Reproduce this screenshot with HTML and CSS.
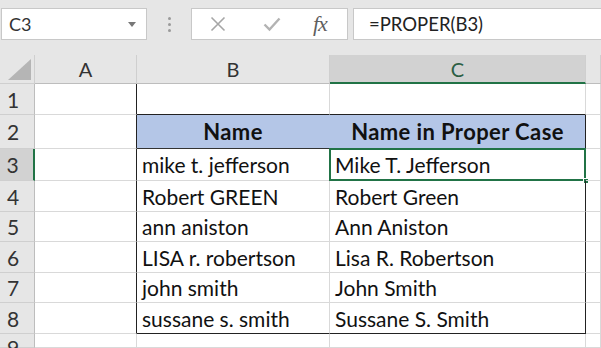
FILE: index.html
```html
<!DOCTYPE html>
<html>
<head>
<meta charset="utf-8">
<link rel="stylesheet" href="styles.css">
</head>
<body>
<div class="app">
  <div class="toolbar">
    <div class="namebox">
      <span class="ref">C3</span>
      <svg class="dd" width="8" height="5" viewBox="0 0 8 5"><path d="M0 0H8L4 5Z" fill="#777"/></svg>
    </div>
    <div class="grip"><i></i><i></i><i></i></div>
    <div class="fbtns">
      <svg class="ico" width="16" height="16" viewBox="0 0 16 16"><path d="M1.5 1.5L14.5 14.5M14.5 1.5L1.5 14.5" stroke="#a6a6a6" stroke-width="1.6" fill="none"/></svg>
      <svg class="ico" width="18" height="16" viewBox="0 0 18 16"><path d="M1.5 8.5L6.5 13.5L16.5 2.5" stroke="#b3b3b3" stroke-width="2.4" fill="none"/></svg>
      <span class="fx">fx</span>
    </div>
    <div class="formula">=PROPER(B3)</div>
  </div>
  <div class="sheet">
    <div class="hd corner"><svg width="23" height="21" viewBox="0 0 23 21"><path d="M23 0V21H0Z" fill="#b5b5b5"/></svg></div>
    <div class="hd col">A</div>
    <div class="hd col">B</div>
    <div class="hd col sel">C</div>
    <div class="hd col"></div>

    <div class="hd rowh">1</div>
    <div class="c tb-r"></div>
    <div class="c tb-b"></div>
    <div class="c tb-b"></div>
    <div class="c"></div>

    <div class="hd rowh">2</div>
    <div class="c tb-r"></div>
    <div class="c th th-b">Name</div>
    <div class="c th tb-r">Name in Proper Case</div>
    <div class="c"></div>

    <div class="hd rowh rsel">3</div>
    <div class="c tb-r"></div>
    <div class="c">mike t. jefferson</div>
    <div class="c tb-r">Mike T. Jefferson<span class="selbox"></span><span class="handle"></span></div>
    <div class="c"></div>

    <div class="hd rowh">4</div>
    <div class="c tb-r"></div>
    <div class="c">Robert GREEN</div>
    <div class="c tb-r">Robert Green</div>
    <div class="c"></div>

    <div class="hd rowh">5</div>
    <div class="c tb-r"></div>
    <div class="c">ann aniston</div>
    <div class="c tb-r">Ann Aniston</div>
    <div class="c"></div>

    <div class="hd rowh">6</div>
    <div class="c tb-r"></div>
    <div class="c">LISA r. robertson</div>
    <div class="c tb-r">Lisa R. Robertson</div>
    <div class="c"></div>

    <div class="hd rowh">7</div>
    <div class="c tb-r"></div>
    <div class="c">john smith</div>
    <div class="c tb-r">John Smith</div>
    <div class="c"></div>

    <div class="hd rowh">8</div>
    <div class="c tb-r"></div>
    <div class="c tb-b">sussane s. smith</div>
    <div class="c tb-r tb-b">Sussane S. Smith</div>
    <div class="c"></div>

    <div class="hd rowh last">9</div>
    <div class="c"></div>
    <div class="c"></div>
    <div class="c"></div>
    <div class="c"></div>
  </div>
</div>
</body>
</html>
```
FILE: styles.css
```css
* { box-sizing: border-box; }
html, body { margin: 0; padding: 0; }
body {
  width: 601px;
  height: 348px;
  overflow: hidden;
  background: #ffffff;
  font-family: "Lato", "Open Sans", sans-serif;
  color: #1a1a1a;
}
.app { width: 601px; }
.toolbar {
  height: 55px;
  background: #e6e6e6;
  display: flex;
  align-items: flex-start;
  padding-top: 8px;
  padding-left: 1px;
}
.namebox {
  width: 146px;
  height: 32px;
  background: #fff;
  border: 1px solid #c8c8c8;
  display: flex;
  align-items: center;
  justify-content: space-between;
  padding: 0 10px 0 7px;
}
.ref { font-size: 18px; color: #333; }
.dd { margin-top: 1px; }
.grip {
  width: 44px;
  height: 32px;
  display: flex;
  flex-direction: column;
  align-items: center;
  justify-content: center;
  gap: 3px;
}
.grip i {
  display: block;
  width: 3px;
  height: 3px;
  border-radius: 50%;
  background: #9a9a9a;
}
.fbtns {
  width: 157px;
  height: 32px;
  background: #fff;
  border: 1px solid #c8c8c8;
  display: flex;
  align-items: center;
  padding-left: 18px;
}
.fbtns .ico:first-child { margin-right: 37px; }
.fbtns .ico:nth-child(2) { margin-right: 32px; }
.fx {
  font-family: "Liberation Serif", serif;
  font-style: italic;
  font-size: 22px;
  color: #5f5f5f;
  letter-spacing: -1px;
}
.formula {
  margin-left: 5px;
  flex: 1;
  height: 32px;
  background: #fff;
  border: 1px solid #c8c8c8;
  border-right: none;
  font-size: 18.5px;
  color: #222;
  padding-left: 15px;
  display: flex;
  align-items: center;
}
.sheet {
  display: grid;
  grid-template-columns: 35px 102px 193px 256px 15px;
  grid-template-rows: 29px 31px 34px 32px 31px 30px 31px 30px 31px 14px;
}
.hd {
  background: #e6e6e6;
  border-right: 1px solid #cfcfcf;
  border-bottom: 1px solid #cfcfcf;
  color: #333;
  font-size: 20px;
  display: flex;
  align-items: center;
  justify-content: center;
}
.corner {
  align-items: flex-end;
  justify-content: flex-end;
  padding: 0 3px 3px 0;
}
.col { border-bottom: 1px solid #bdbdbd; }
.col.sel {
  background: #d2d2d2;
  border-bottom: 2px solid #217346;
  color: #2b5e44;
}
.rowh {
  padding-right: 8px;
  border-right: 1px solid #bdbdbd;
  font-size: 21px;
}
.rowh.last { align-items: flex-start; padding-top: 1px; }
.rowh.rsel {
  background: #d2d2d2;
  border-right: 2px solid #217346;
}
.c {
  position: relative;
  border-right: 1px solid #d9d9d9;
  border-bottom: 1px solid #d9d9d9;
  font-size: 21px;
  display: flex;
  align-items: center;
  padding-left: 5px;
  white-space: nowrap;
  color: #111;
}
.tb-r { border-right: 1px solid #222; }
.tb-b { border-bottom: 1px solid #222; }
.th {
  background: #b4c6e7;
  font-weight: 700;
  font-size: 22px;
  letter-spacing: 0.4px;
  justify-content: center;
  padding-left: 0;
  border-bottom: 1px solid #333;
}
.th-b { border-right: 1px solid #b4c6e7; }
.selbox {
  position: absolute;
  left: -1px;
  top: -1px;
  right: -1px;
  bottom: -1px;
  border: 2px solid #217346;
}
.handle {
  position: absolute;
  right: -4px;
  bottom: -4px;
  width: 6px;
  height: 6px;
  background: #217346;
  border: 1px solid #fff;
}
```
